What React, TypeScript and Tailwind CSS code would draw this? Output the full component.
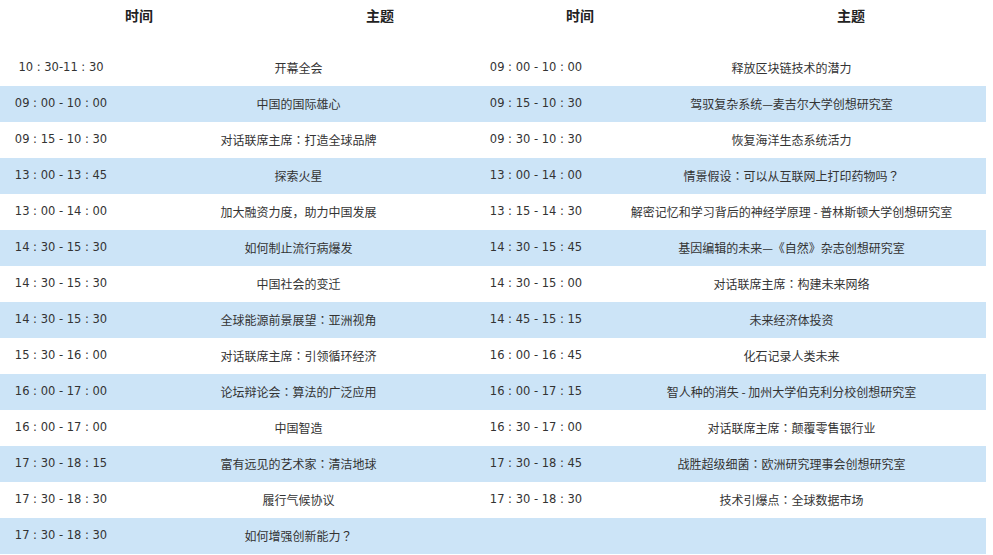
const left: [string, string][] = [
  ['10 : 30-11 : 30', '开幕全会'],
  ['09 : 00 - 10 : 00', '中国的国际雄心'],
  ['09 : 15 - 10 : 30', '对话联席主席：打造全球品牌'],
  ['13 : 00 - 13 : 45', '探索火星'],
  ['13 : 00 - 14 : 00', '加大融资力度，助力中国发展'],
  ['14 : 30 - 15 : 30', '如何制止流行病爆发'],
  ['14 : 30 - 15 : 30', '中国社会的变迁'],
  ['14 : 30 - 15 : 30', '全球能源前景展望：亚洲视角'],
  ['15 : 30 - 16 : 00', '对话联席主席：引领循环经济'],
  ['16 : 00 - 17 : 00', '论坛辩论会：算法的广泛应用'],
  ['16 : 00 - 17 : 00', '中国智造'],
  ['17 : 30 - 18 : 15', '富有远见的艺术家：清洁地球'],
  ['17 : 30 - 18 : 30', '履行气候协议'],
  ['17 : 30 - 18 : 30', '如何增强创新能力？'],
]

const right: [string, string][] = [
  ['09 : 00 - 10 : 00', '释放区块链技术的潜力'],
  ['09 : 15 - 10 : 30', '驾驭复杂系统—麦吉尔大学创想研究室'],
  ['09 : 30 - 10 : 30', '恢复海洋生态系统活力'],
  ['13 : 00 - 14 : 00', '情景假设：可以从互联网上打印药物吗？'],
  ['13 : 15 - 14 : 30', '解密记忆和学习背后的神经学原理 - 普林斯顿大学创想研究室'],
  ['14 : 30 - 15 : 45', '基因编辑的未来—《自然》杂志创想研究室'],
  ['14 : 30 - 15 : 00', '对话联席主席：构建未来网络'],
  ['14 : 45 - 15 : 15', '未来经济体投资'],
  ['16 : 00 - 16 : 45', '化石记录人类未来'],
  ['16 : 00 - 17 : 15', '智人种的消失 - 加州大学伯克利分校创想研究室'],
  ['16 : 30 - 17 : 00', '对话联席主席：颠覆零售银行业'],
  ['17 : 30 - 18 : 45', '战胜超级细菌：欧洲研究理事会创想研究室'],
  ['17 : 30 - 18 : 30', '技术引爆点：全球数据市场'],
  ['', ''],
]

const zh = { fontFamily: '"Noto Sans CJK SC", sans-serif' }
const tc = { fontFamily: '"Noto Sans CJK TC", sans-serif' }
const num = { fontFamily: '"DejaVu Sans", "Noto Sans CJK SC", sans-serif' }

// centred full-width colon / question mark, as in the original
function Topic({ text }: { text: string }) {
  const parts = text.split(/([：？])/)
  return (
    <div className="text-center">
      {parts.map((p, i) =>
        p === '：' || p === '？' ? (
          <span key={i} style={tc}>{p}</span>
        ) : (
          <span key={i}>{p}</span>
        )
      )}
    </div>
  )
}

export default function App() {
  return (
    <div className="w-[993px] h-[555px] bg-white text-[#333] overflow-hidden" style={zh}>
      <div className="grid grid-cols-[278px_204px_196px_312px] h-[30px] items-center text-[14px] font-bold text-[#222]">
        <div className="text-center">时间</div>
        <div className="text-center">主题</div>
        <div className="text-center">时间</div>
        <div className="text-center pl-[34px]">主题</div>
      </div>
      <div className="mt-[20px] w-[986px]">
        {left.map((l, i) => {
          const r = right[i]
          return (
            <div
              key={i}
              className={`grid grid-cols-[122px_353px_122px_389px] h-[36px] items-center text-[12px] ${i % 2 === 1 ? 'bg-[#cce4f7]' : ''}`}
            >
              <div className="text-center text-[11.5px]" style={num}>{l[0]}</div>
              <Topic text={l[1]} />
              <div className="text-center text-[11.5px]" style={num}>{r[0]}</div>
              <Topic text={r[1]} />
            </div>
          )
        })}
      </div>
    </div>
  )
}
